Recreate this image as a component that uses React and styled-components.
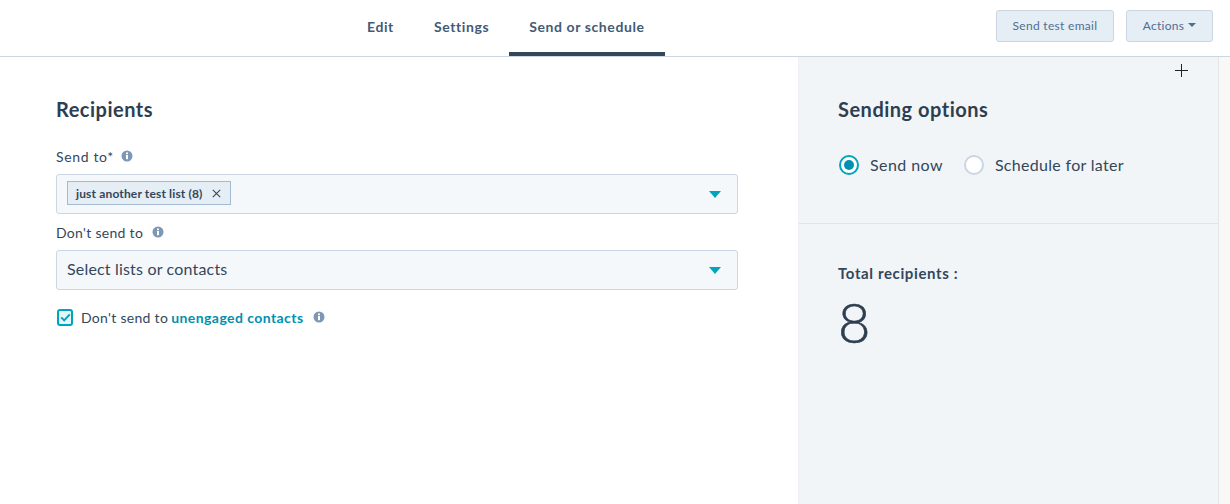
import React from 'react';
import styled, { createGlobalStyle } from 'styled-components';

const Global = createGlobalStyle`
  html, body { margin: 0; padding: 0; background: #fff; }
  body { font-family: "Lato", "Liberation Sans", sans-serif; color: #33475b; -webkit-font-smoothing: antialiased; }
  * { box-sizing: border-box; }
`;

const Page = styled.div`
  position: relative;
  width: 1230px;
  height: 504px;
  overflow: hidden;
  display: flex;
  flex-direction: column;
`;

const Header = styled.header`
  height: 57px;
  flex: none;
  border-bottom: 1px solid #cbd6e2;
  display: flex;
  justify-content: space-between;
  padding: 0 17px 0 347px;
`;

const Tabs = styled.nav`
  display: flex;
  align-items: stretch;
`;

const Tab = styled.div`
  padding: 0 20px;
  display: flex;
  align-items: center;
  height: 56px;
  font-size: 14px;
  font-weight: 700;
  letter-spacing: 0.6px;
  color: #425b76;
  border-bottom: 4px solid ${p => (p.$active ? '#33475b' : 'transparent')};
`;

const Actions = styled.div`
  display: flex;
  align-items: flex-start;
  gap: 12px;
  padding-top: 10px;
`;

const Button = styled.button`
  height: 32px;
  width: ${p => p.$w}px;
  display: flex;
  align-items: center;
  justify-content: center;
  gap: 4px;
  background: #e5edf5;
  border: 1px solid #cbd6e2;
  border-radius: 3px;
  font: 400 12px "Lato", sans-serif;
  letter-spacing: 0.3px;
  color: #506e91;
  padding: 0 0 2px;
`;

const Caret = styled.span`
  width: 0;
  height: 0;
  border-left: 4px solid transparent;
  border-right: 4px solid transparent;
  border-top: 4px solid #506e91;
`;

const Body = styled.div`
  flex: 1;
  display: flex;
  min-height: 0;
`;

const Main = styled.main`
  width: 798px;
  flex: none;
  padding: 40px 60px 0 56px;
`;

const Side = styled.aside`
  flex: 1;
  display: flex;
  background: #f2f5f8;
  border-left: 1px solid #eef1f5;
`;

const SideContent = styled.div`
  flex: 1;
  display: flex;
  flex-direction: column;
`;

const ScrollTrack = styled.div`
  width: 12px;
  flex: none;
  background: #f8f8f8;
  border-left: 1px solid #e5e5e5;
`;

const Title = styled.h2`
  margin: 0;
  font-size: 20px;
  line-height: 24px;
  font-weight: 700;
  letter-spacing: 0.5px;
  color: #2d3e50;
`;

const SideTop = styled.section`
  height: 167px;
  flex: none;
  padding: 40px 28px 0 39px;
  border-bottom: 1px solid #dfe3eb;
`;

const Radios = styled.div`
  display: flex;
  align-items: center;
  gap: 21px;
  margin-top: 34px;
  padding-left: 1px;
`;

const RadioItem = styled.label`
  display: flex;
  align-items: center;
  gap: 11px;
  font-size: 16px;
  line-height: 20px;
  letter-spacing: ${p => p.$ls};
  color: #33475b;
`;

const RadioDot = styled.span`
  width: 20px;
  height: 20px;
  border-radius: 50%;
  background: #fff;
  border: ${p => (p.$on ? '2px solid #00a4bd' : '2px solid #cbd6e2')};
  display: flex;
  align-items: center;
  justify-content: center;
  &::after {
    content: '';
    width: 10px;
    height: 10px;
    border-radius: 50%;
    background: ${p => (p.$on ? '#0091ae' : 'transparent')};
  }
`;

const SideBottom = styled.section`
  padding: 39px 39px 0;
`;

const TotalLabel = styled.div`
  font-size: 15px;
  line-height: 20px;
  font-weight: 700;
  letter-spacing: 0.62px;
  color: #33475b;
`;

const TotalValue = styled.div`
  margin-top: 9px;
  font-size: 56px;
  line-height: 60px;
  font-weight: 300;
  -webkit-text-stroke: 0.6px #2d3e50;
  color: #2d3e50;
`;

const FieldLabel = styled.div`
  display: flex;
  align-items: center;
  gap: ${p => p.$gap}px;
  height: 20px;
  font-size: 14px;
  letter-spacing: ${p => p.$ls};
  color: #33475b;
  margin-top: ${p => p.$mt}px;
  margin-bottom: 8px;
`;

const SelectBox = styled.div`
  height: 40px;
  display: flex;
  align-items: center;
  justify-content: space-between;
  padding: 0 16px 2px 10px;
  background: #f5f8fa;
  border: 1px solid #cbd6e2;
  border-radius: 3px;
  font-size: 16px;
  letter-spacing: 0.18px;
  color: #33475b;
`;

const Placeholder = styled.span`
  margin-bottom: 2px;
`;

const Chip = styled.span`
  display: inline-flex;
  align-items: center;
  gap: 9px;
  height: 24px;
  padding: 0 9px 0 8px;
  background: #e5edf5;
  border: 1px solid #a3bad4;
  font-size: 12px;
  font-weight: 700;
  letter-spacing: 0.15px;
  color: #33475b;
`;

const Arrow = styled.span`
  width: 0;
  height: 0;
  margin-top: 2px;
  border-left: 6px solid transparent;
  border-right: 6px solid transparent;
  border-top: 7px solid #00a4bd;
`;

const CheckRow = styled.div`
  display: flex;
  align-items: center;
  height: 20px;
  margin-top: 17px;
  font-size: 14px;
  letter-spacing: 0.3px;
  color: #33475b;
`;

const CheckBox = styled.span`
  width: 16px;
  height: 17px;
  margin-left: 1px;
  margin-right: 8px;
  border: 2px solid #00a4bd;
  border-radius: 3px;
  background: #e5f5f8;
  display: flex;
  align-items: center;
  justify-content: center;
`;

const LinkText = styled.a`
  margin-left: 3px;
  margin-right: 9px;
  font-weight: 700;
  letter-spacing: 0.43px;
  color: #0091ae;
`;

const Cursor = styled.svg`
  position: absolute;
  left: 1175px;
  top: 64px;
`;

const InfoSvg = styled.svg`
  flex: none;
  display: block;
`;

function Info() {
  return (
    <InfoSvg width="12" height="12" viewBox="0 0 12 12">
      <circle cx="6" cy="6" r="5.5" fill="#7c98b6" />
      <rect x="5" y="5" width="2" height="4.2" fill="#fff" />
      <rect x="5" y="2.5" width="2" height="1.7" fill="#fff" />
    </InfoSvg>
  );
}

export default function App() {
  return (
    <Page>
      <Global />
      <Header>
        <Tabs>
          <Tab>Edit</Tab>
          <Tab>Settings</Tab>
          <Tab $active>Send or schedule</Tab>
        </Tabs>
        <Actions>
          <Button $w={118}>Send test email</Button>
          <Button $w={87}>Actions <Caret /></Button>
        </Actions>
      </Header>
      <Body>
        <Main>
          <Title>Recipients</Title>
          <FieldLabel $mt={25} $gap={7} $ls="0.65px">Send to* <Info /></FieldLabel>
          <SelectBox>
            <Chip>
              just another test list (8)
              <svg width="9" height="9" viewBox="0 0 9 9"><path d="M.8.8l7.4 7.4M8.2.8L.8 8.2" stroke="#33475b" strokeWidth="1.1" fill="none" /></svg>
            </Chip>
            <Arrow />
          </SelectBox>
          <FieldLabel $mt={8} $gap={9} $ls="0.3px">Don't send to <Info /></FieldLabel>
          <SelectBox><Placeholder>Select lists or contacts</Placeholder><Arrow /></SelectBox>
          <CheckRow>
            <CheckBox>
              <svg width="11" height="9" viewBox="0 0 11 9"><path d="M1.2 4.4l3 3L9.8 1.4" stroke="#00a4bd" strokeWidth="2" fill="none" /></svg>
            </CheckBox>
            Don't send to <LinkText>unengaged contacts</LinkText> <Info />
          </CheckRow>
        </Main>
        <Side>
          <SideContent>
            <SideTop>
              <Title>Sending options</Title>
              <Radios>
                <RadioItem $ls="0.42px"><RadioDot $on />Send now</RadioItem>
                <RadioItem $ls="0.31px"><RadioDot />Schedule for later</RadioItem>
              </Radios>
            </SideTop>
            <SideBottom>
              <TotalLabel>Total recipients :</TotalLabel>
              <TotalValue>8</TotalValue>
            </SideBottom>
          </SideContent>
          <ScrollTrack />
        </Side>
      </Body>
      <Cursor width="13" height="13" viewBox="0 0 13 13"><path d="M6.5 0v13M0 6.5h13" stroke="#222" strokeWidth="1" fill="none" /></Cursor>
    </Page>
  );
}
